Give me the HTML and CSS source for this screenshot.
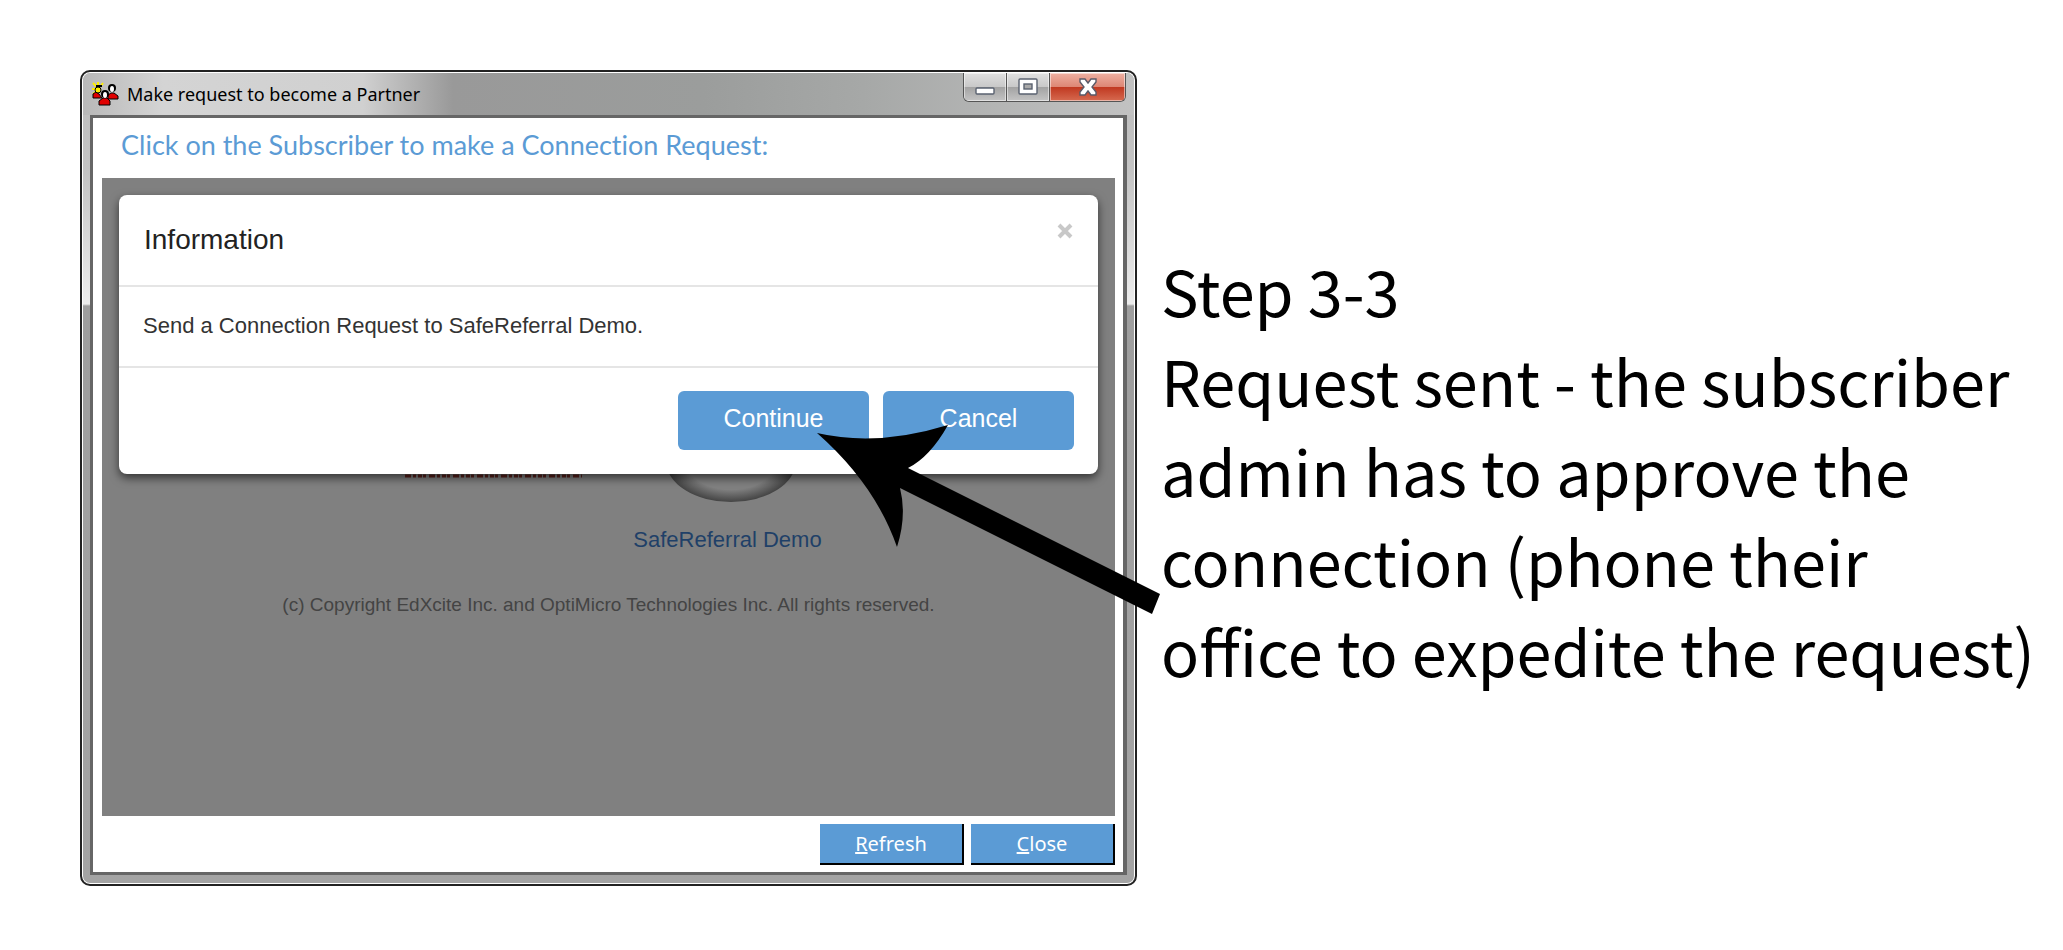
FILE: index.html
```
<!DOCTYPE html>
<html lang="en">

<head>
    <meta charset="UTF-8">
    <meta name="viewport" content="width=device-width, initial-scale=1.0">
    <title>Make request to become a Partner</title>
    <link rel="stylesheet" href="styles.css">
</head>

<body>
    <main class="page">
        <section class="window">
            <header class="titlebar">
                <svg class="app-icon" width="27" height="24" viewBox="0 0 27 24">
                    <path d="M1 1l4 4M6 0v5M0 7h5M11 1L8 5M1 12l4-3" stroke="#ffee00" stroke-width="2" />
                    <path d="M1 16v-4l3-2 3 2 3 4zM16 17v-4l3-2h3l4 3v3zM7 23v-4l4-3h4l3 3v4z" fill="#e00000" stroke="#000" />
                    <circle cx="6" cy="8" r="3" fill="#ffee00" stroke="#000" />
                    <circle cx="20" cy="6" r="4" fill="#000" />
                    <ellipse cx="20" cy="7" rx="2" ry="3" fill="#fff" />
                    <circle cx="13" cy="12" r="4" fill="#000" />
                    <ellipse cx="13" cy="13" rx="2" ry="3" fill="#fff" />
                    <path d="M4 4h6" stroke="#000" stroke-width="2" />
                </svg>
                <span class="window-title">Make request to become a Partner</span>
                <div class="window-controls">
                    <button type="button" class="control" aria-label="Minimize">
                        <svg width="20" height="18" viewBox="0 0 20 18">
                            <rect x="1" y="10" width="18" height="6" rx="1" fill="#fff" stroke="#5a6270" stroke-width="1.4" />
                        </svg>
                    </button>
                    <button type="button" class="control" aria-label="Maximize">
                        <svg width="20" height="18" viewBox="0 0 20 18">
                            <rect x="1" y="1" width="18" height="15" rx="1" fill="#fff" stroke="#5a6270" stroke-width="1.4" />
                            <rect x="6" y="6" width="8" height="5" fill="#aaa" stroke="#5a6270" stroke-width="1.4" />
                        </svg>
                    </button>
                    <button type="button" class="control control-close" aria-label="Close window">
                        <svg width="18" height="18" viewBox="0 0 18 18">
                            <path d="M1 1h5l3 4 3-4h5v3l-4 5 4 5v3h-5l-3-4-3 4H1v-3l4-5-4-5z" fill="#fff" stroke="#5a5a68" stroke-width="1.4" />
                        </svg>
                    </button>
                </div>
            </header>

            <div class="client">
                <h1 class="heading">Click on the Subscriber to make a Connection Request:</h1>

                <div class="panel">
                    <svg class="logos" width="412" height="30" viewBox="0 0 412 30">
                        <defs>
                            <radialGradient id="disc" cx="0.5" cy="0.5" r="0.5">
                                <stop offset="0.7" stop-color="#808080" />
                                <stop offset="1" stop-color="#444" />
                            </radialGradient>
                        </defs>
                        <path d="M2 3h177" stroke="#5c221c" stroke-width="3" stroke-dasharray="6 2 3 2 4 1 3 3" />
                        <ellipse cx="328" cy="-12" rx="65" ry="41" fill="url(#disc)" />
                    </svg>
                    <a class="subscriber" href="#">SafeReferral Demo</a>
                    <p class="copyright">(c) Copyright EdXcite Inc. and OptiMicro Technologies Inc. All rights reserved.</p>

                    <div class="modal" role="dialog" aria-labelledby="modalTitle">
                        <div class="modal-header">
                            <h2 id="modalTitle">Information</h2>
                            <button type="button" class="modal-close" aria-label="Close dialog">
                                <svg width="16" height="16" viewBox="0 0 16 16">
                                    <path d="M2 2l12 12M14 2L2 14" stroke="#c8c8c8" stroke-width="4" />
                                </svg>
                            </button>
                        </div>
                        <p class="modal-body">Send a Connection Request to SafeReferral Demo.</p>
                        <div class="modal-footer">
                            <button type="button" class="btn">Continue</button>
                            <button type="button" class="btn">Cancel</button>
                        </div>
                    </div>
                </div>

                <footer class="actions">
                    <button type="button" class="action"><u>R</u>efresh</button>
                    <button type="button" class="action"><u>C</u>lose</button>
                </footer>
            </div>

            <!-- arrow from the note to the Continue button -->
            <svg class="arrow" width="346" height="192" viewBox="816 424 346 192">
                <path d="M817 433Q877 447 948 425Q930 457 908 468L1160 594L1152 614L900 488Q907 516 897 547Q875 484 817 433z" />
            </svg>
        </section>

        <section class="note">
            <p>Step 3-3</p>
            <p>Request sent - the subscriber admin has to approve the connection (phone their<br>office to expedite the request)</p>
        </section>
    </main>
</body>

</html>
```
FILE: styles.css
```
* {
    box-sizing: border-box;
}

body {
    margin: 0;
    background: #fff;
    font-family: "Liberation Sans", Arial, sans-serif;
}

h1,
h2,
p {
    margin: 0;
    font-weight: normal;
}

button {
    padding: 0;
    border: none;
    cursor: pointer;
}

.page {
    display: flex;
    gap: 24px;
    min-height: 100vh;
    padding: 70px 8px 64px 80px;
}

/* Window frame */
.window {
    position: relative;
    display: flex;
    flex-direction: column;
    flex: 0 0 1057px;
    padding: 0 8px 9px;
    border: 2px solid #222;
    border-radius: 10px;
    background: linear-gradient(#bbb, #c4c4c4 100px, #ececec 232px, #9e9e9e 234px, #a4a4a4);
    box-shadow: inset 0 0 0 1px #fff;
}

.titlebar {
    display: flex;
    align-items: center;
    height: 42px;
    margin: 1px -7px 0;
    padding-left: 9px;
    border-radius: 8px 8px 0 0;
    background: linear-gradient(90deg, #b8b8b8, #d4d4d4 80px, #d0d0d0 280px, #999 370px, #9b9d9c 620px, #a6a8a7 780px, #c2c2c2);
}

.window-title {
    margin-left: 8px;
    font: 18px "Noto Sans", sans-serif;
    color: #000;
}

.window-controls {
    display: flex;
    align-self: flex-start;
    margin: 0 8px 0 auto;
    border: 1px solid #555;
    border-top: none;
    border-radius: 0 0 6px 6px;
    overflow: hidden;
}

.control {
    display: flex;
    align-items: center;
    justify-content: center;
    width: 43px;
    height: 28px;
    border-right: 1px solid #555;
    background: linear-gradient(#e0e0e0, #c8c8c8 50%, #a2a2a2 50%, #c4c4c4);
    box-shadow: inset 0 0 0 1px rgba(255, 255, 255, 0.5);
}

.control-close {
    width: 75px;
    border-right: none;
    background: linear-gradient(#eeb0a2, #dd8674 50%, #c03820 50%, #d66a50);
}

.client {
    display: flex;
    flex-direction: column;
    flex: 1;
    padding: 0 8px 7px 9px;
    border: 3px solid #666;
    border-right-width: 4px;
    background: #fff;
}

.heading {
    padding: 5px 0 11px 19px;
    font: 27px/44px Lato, sans-serif;
    font-variant-ligatures: none;
    color: #5b9bd5;
}

/* Greyed-out page behind the dialog */
.panel {
    position: relative;
    display: flex;
    flex-direction: column;
    align-items: center;
    flex: 1;
    padding-top: 295px;
    background: #808080;
}

.subscriber {
    margin: 22px 0 0 238px;
    font-size: 22px;
    line-height: 30px;
    color: #1f4068;
    text-decoration: none;
}

.copyright {
    margin-top: 38px;
    font-size: 19px;
    line-height: 24px;
    color: #444;
}

.modal {
    position: absolute;
    top: 17px;
    left: 17px;
    right: 17px;
    border-radius: 8px;
    background: #fff;
    box-shadow: 0 4px 10px rgba(0, 0, 0, 0.6);
}

.modal-header {
    display: flex;
    justify-content: space-between;
    padding: 24px 25px;
    border-bottom: 2px solid #e5e5e5;
}

.modal-header h2 {
    font-size: 28px;
    line-height: 42px;
    color: #222;
}

.modal-close {
    height: 26px;
    background: none;
}

.modal-body {
    padding: 22px 24px 24px;
    border-bottom: 2px solid #e5e5e5;
    font-size: 22px;
    line-height: 33px;
    color: #333;
}

.modal-footer {
    display: flex;
    justify-content: flex-end;
    gap: 14px;
    padding: 23px 24px 24px;
}

.btn {
    width: 191px;
    height: 59px;
    padding-bottom: 4px;
    border-radius: 6px;
    background: #5b9bd5;
    font: 25px "Liberation Sans", Arial, sans-serif;
    color: #fff;
}

.actions {
    display: flex;
    justify-content: flex-end;
    gap: 7px;
    padding-top: 8px;
}

.action {
    width: 144px;
    height: 41px;
    border-right: 2px solid #000;
    border-bottom: 2px solid #000;
    background: #5b9bd5;
    font: 20px "Noto Sans", sans-serif;
    color: #fff;
}

.arrow {
    position: absolute;
    top: 352px;
    left: 734px;
}

.note {
    flex: 1;
    padding-top: 175px;
    font: 63px/90px "Noto Sans CJK SC", sans-serif;
    color: #000;
}
```
